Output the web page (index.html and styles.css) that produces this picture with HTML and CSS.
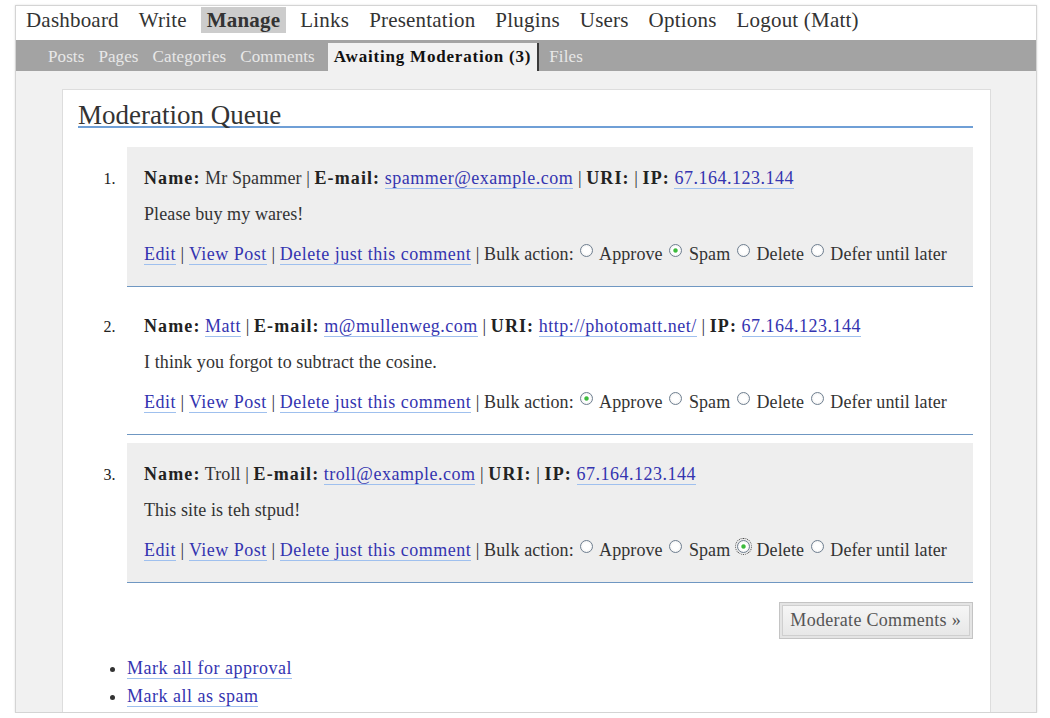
FILE: index.html
```html
<!DOCTYPE html>
<html>
<head>
<meta charset="utf-8">
<title>Moderation Queue</title>
<link rel="stylesheet" href="styles.css">
</head>
<body>
<div class="frame">
  <nav class="topnav">
    <a href="#">Dashboard</a>
    <a href="#">Write</a>
    <a href="#" class="current">Manage</a>
    <a href="#">Links</a>
    <a href="#">Presentation</a>
    <a href="#">Plugins</a>
    <a href="#">Users</a>
    <a href="#">Options</a>
    <a href="#">Logout (Matt)</a>
  </nav>
  <nav class="subnav">
    <a href="#">Posts</a>
    <a href="#">Pages</a>
    <a href="#">Categories</a>
    <a href="#">Comments</a>
    <a href="#" class="current">Awaiting Moderation (3)</a>
    <a href="#">Files</a>
  </nav>
  <div class="area">
    <div class="wrap">
      <h2>Moderation Queue</h2>
      <form>
        <ol class="commentlist">
          <li class="alternate">
            <p class="meta"><strong>Name:</strong> Mr Spammer | <strong>E-mail:</strong> <a href="#">spammer@example.com</a> | <strong>URI:</strong> | <strong>IP:</strong> <a href="#">67.164.123.144</a></p>
            <p class="body">Please buy my wares!</p>
            <p class="actions"><a href="#">Edit</a> | <a href="#">View Post</a> | <a href="#">Delete just this comment</a> | Bulk action: <input type="radio" name="c1"> Approve <input type="radio" name="c1" checked> Spam <input type="radio" name="c1"> Delete <input type="radio" name="c1"> Defer until later</p>
          </li>
          <li>
            <p class="meta"><strong>Name:</strong> <a href="#">Matt</a> | <strong>E-mail:</strong> <a href="#">m@mullenweg.com</a> | <strong>URI:</strong> <a href="#">http://photomatt.net/</a> | <strong>IP:</strong> <a href="#">67.164.123.144</a></p>
            <p class="body">I think you forgot to subtract the cosine.</p>
            <p class="actions"><a href="#">Edit</a> | <a href="#">View Post</a> | <a href="#">Delete just this comment</a> | Bulk action: <input type="radio" name="c2" checked> Approve <input type="radio" name="c2"> Spam <input type="radio" name="c2"> Delete <input type="radio" name="c2"> Defer until later</p>
          </li>
          <li class="alternate">
            <p class="meta"><strong>Name:</strong> Troll | <strong>E-mail:</strong> <a href="#">troll@example.com</a> | <strong>URI:</strong> | <strong>IP:</strong> <a href="#">67.164.123.144</a></p>
            <p class="body">This site is teh stpud!</p>
            <p class="actions"><a href="#">Edit</a> | <a href="#">View Post</a> | <a href="#">Delete just this comment</a> | Bulk action: <input type="radio" name="c3"> Approve <input type="radio" name="c3"> Spam <input type="radio" name="c3" class="focused" checked> Delete <input type="radio" name="c3"> Defer until later</p>
          </li>
        </ol>
        <p class="submit"><button type="button">Moderate Comments &raquo;</button></p>
      </form>
      <ul class="bulk">
        <li><a href="#">Mark all for approval</a></li>
        <li><a href="#">Mark all as spam</a></li>
      </ul>
    </div>
  </div>
</div>
</body>
</html>
```

FILE: styles.css
```css
html, body {
  margin: 0;
  padding: 0;
  background: #ffffff;
}

body {
  font-family: "Liberation Serif", "Times New Roman", serif;
  color: #333333;
}

.frame {
  margin: 5px 0 0 15px;
  width: 1020px;
  height: 706px;
  border: 1px solid #d4d4d4;
  box-shadow: 0 0 2px rgba(0, 0, 0, 0.12);
  overflow: hidden;
  background: #f1f1f1;
  display: flex;
  flex-direction: column;
}

.topnav {
  background: #ffffff;
  height: 33px;
  display: flex;
  align-items: flex-start;
  gap: 8px;
  padding: 1px 0 0 4px;
  font-size: 21px;
  letter-spacing: 0.2px;
}

.topnav a {
  color: #333333;
  text-decoration: none;
  padding: 0 6px;
  height: 26px;
  line-height: 26px;
}

.topnav a.current {
  background: #cccccc;
  font-weight: bold;
}

.subnav {
  background: #a3a3a3;
  height: 31px;
  display: flex;
  align-items: flex-end;
  padding-left: 25px;
  font-size: 17px;
  letter-spacing: 0.1px;
}

.subnav a {
  color: #e8e8e8;
  text-decoration: none;
  padding: 0 7px;
  height: 28px;
  line-height: 27px;
}

.subnav a.current {
  background: #f1f1f1;
  color: #111111;
  font-weight: bold;
  letter-spacing: 0.8px;
  padding: 0 6px;
  margin-left: 6px;
  border-right: 2px solid #3a3a3a;
  margin-right: 3px;
}

.area {
  flex: 1;
  padding: 18px 45px 0 46px;
}

.wrap {
  background: #ffffff;
  border: 1px solid #dddddd;
  border-bottom: none;
  height: 100%;
  padding: 14px 17px 0 15px;
}

.wrap h2 {
  margin: 0;
  font-weight: normal;
  font-size: 27px;
  line-height: 22px;
  color: #333333;
  border-bottom: 2px solid #6f9fd6;
}

.wrap a {
  color: #3434b0;
  text-decoration: none;
  border-bottom: 1px solid #9fc0ee;
  letter-spacing: 0.5px;
}

.commentlist {
  margin: 19px 0 0 0;
  padding: 0 0 0 49px;
  font-size: 18px;
  letter-spacing: 0.1px;
}

.commentlist li {
  padding: 20px 17px 21px;
  margin-bottom: 8px;
  border-bottom: 1px solid #6f97c2;
}

.commentlist li::marker {
  content: counter(list-item) ".\2002\2009";
  font-size: 16px;
  color: #222222;
}

.commentlist li.alternate {
  background: #eeeeee;
}

.commentlist p {
  margin: 0;
  line-height: 22px;
}

.commentlist p.meta {
  margin-bottom: 14px;
}

.commentlist p.body {
  margin-bottom: 18px;
}

.commentlist strong {
  color: #222222;
  letter-spacing: 1.1px;
}

.actions input[type="radio"] {
  appearance: none;
  -webkit-appearance: none;
  width: 13px;
  height: 13px;
  margin: 0 2px;
  border: 1px solid #6f7f90;
  border-radius: 50%;
  background: radial-gradient(circle, #ffffff 40%, #e8e8e8 100%);
  vertical-align: 3px;
}

.actions input[type="radio"]:checked {
  background: radial-gradient(circle, #3dbb3d 0, #3dbb3d 1.6px, #ffffff 2.8px, #ffffff 45%, #e4e4e4 100%);
}

.actions input.focused {
  outline: 1px dotted #444444;
  outline-offset: 1px;
}

.submit {
  margin: 19px 0 0 0;
  display: flex;
  justify-content: flex-end;
}

.submit button {
  font-family: "Liberation Serif", "Times New Roman", serif;
  font-size: 18px;
  letter-spacing: 0.3px;
  color: #555555;
  height: 37px;
  padding: 0 11px 0 10px;
  background: linear-gradient(#f7f7f7, #e6e6e6);
  border: 1px solid #c4c4c4;
  box-shadow: inset 0 0 0 2px #e4e4e4, inset 0 0 0 3px #cfcfcf;
  cursor: pointer;
}

.bulk {
  margin: 15px 0 0 0;
  padding: 0 0 0 49px;
  font-size: 18px;
  list-style: disc;
}

.bulk li {
  line-height: 28px;
}
```
